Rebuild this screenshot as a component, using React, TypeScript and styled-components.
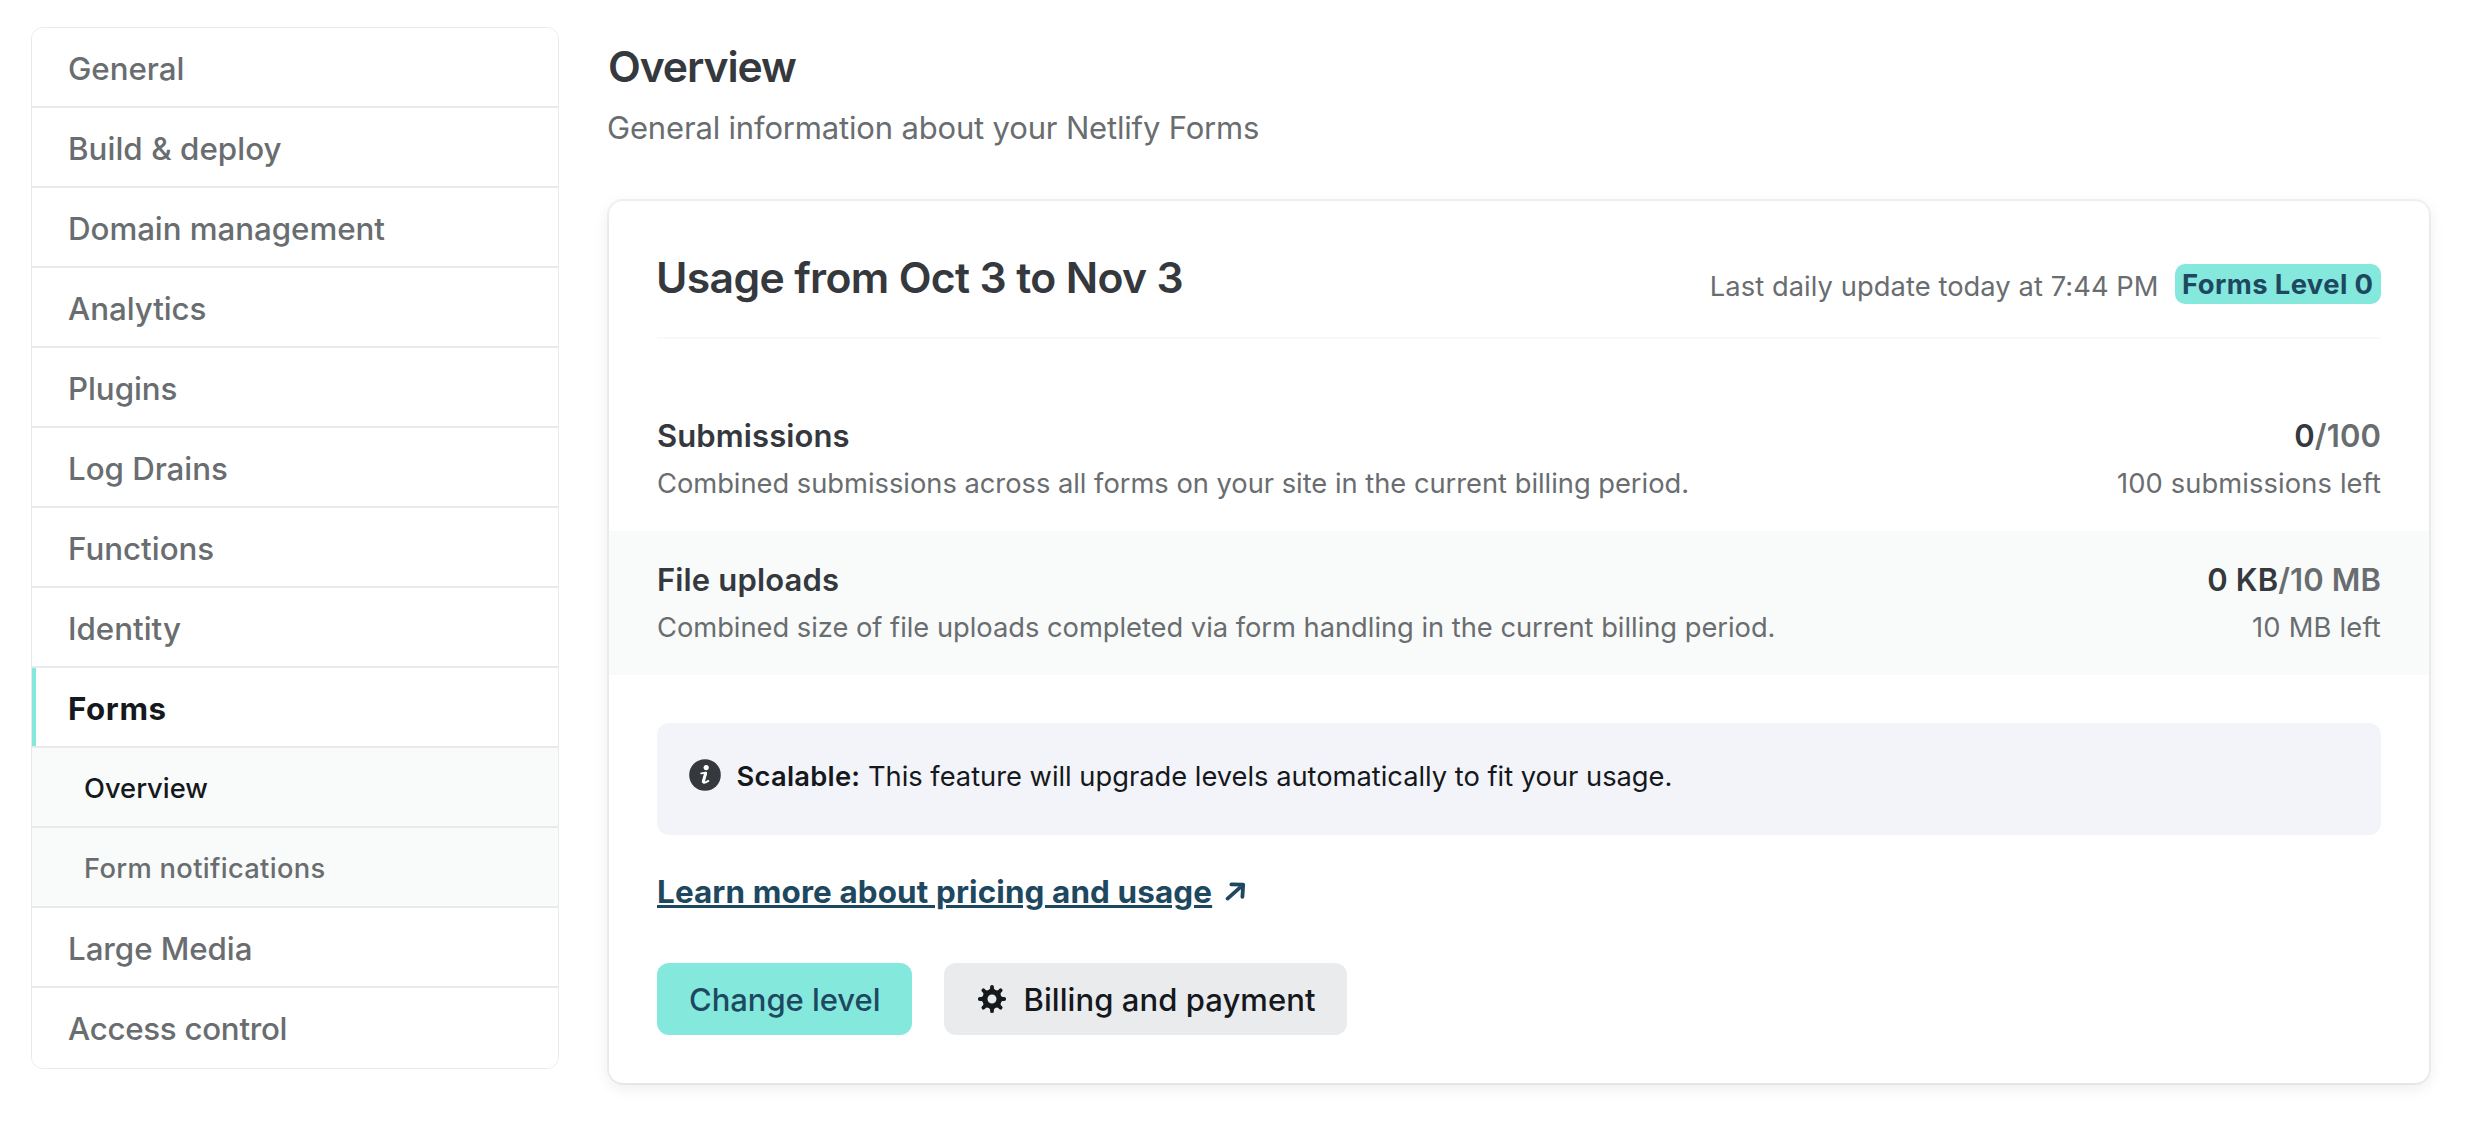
import React from 'react';
import styled, { createGlobalStyle } from 'styled-components';

const color = {
  ink: '#15181c',
  heading: '#35393e',
  muted: '#696d70',
  line: '#e9ebeb',
  teal: '#85e8dd',
  navy: '#1e4860',
  tint: '#f9fbfa',
  info: '#f3f4f9',
  grey: '#e9ebec',
};

const GlobalStyle = createGlobalStyle`
  *, *::before, *::after { box-sizing: border-box; }
  body {
    margin: 0;
    background: #fff;
    color: ${color.ink};
    font-family: Inter, 'Liberation Sans', sans-serif;
  }
  h1, h2, h3, p, ul { margin: 0; padding: 0; }
`;

const Page = styled.div`
  display: flex;
  align-items: flex-start;
  gap: 50px;
  min-height: 1142px;
  padding: 27px 53px 0 31px;
`;

const Sidebar = styled.ul`
  flex: none;
  width: 528px;
  border: 1px solid ${color.line};
  border-radius: 12px;
  list-style: none;
  overflow: hidden;
`;

const NavItem = styled.li<{ $active?: boolean; $sub?: boolean; $track: number }>`
  height: 80px;
  padding: 2px 0 0 ${(p) => (p.$sub ? 52 : 36)}px;
  border-bottom: 2px solid ${color.line};
  background: ${(p) => (p.$sub ? color.tint : '#fff')};
  box-shadow: ${(p) => (p.$active && !p.$sub ? `inset 4px 0 ${color.teal}` : 'none')};
  color: ${(p) => (p.$active ? color.ink : color.muted)};
  font-size: ${(p) => (p.$sub ? 27.3 : 31.3)}px;
  font-weight: ${(p) => (p.$active && !p.$sub ? 700 : 500)};
  line-height: ${(p) => (p.$sub ? 77 : 78)}px;
  letter-spacing: ${(p) => p.$track}px;
  white-space: nowrap;

  &:last-child {
    border-bottom: 0;
  }
`;

const Main = styled.main`
  flex: 1;
  min-width: 0;
  padding-top: 14px;
`;

const Title = styled.h1<{ $track: number }>`
  margin-left: -1px;
  color: ${color.heading};
  font-size: 42.7px;
  font-weight: 600;
  line-height: 51px;
  letter-spacing: ${(p) => p.$track}px;
  white-space: nowrap;
`;

const Intro = styled.p`
  margin: 17px 0 55px -2px;
  color: ${color.muted};
  font-size: 31px;
  line-height: 37px;
  letter-spacing: -0.17px;
`;

const Card = styled.section`
  height: 882px;
  border-radius: 14px;
  background: #fff;
  box-shadow: 0 0 0 2px rgba(14, 30, 37, 0.05), 0 4px 16px rgba(14, 30, 37, 0.09);
`;

const CardHeader = styled.header`
  display: flex;
  justify-content: space-between;
  align-items: flex-start;
  height: 138px;
  margin: 0 48px 48px;
  padding-top: 51px;
  border-bottom: 2px solid #f8f9f9;
`;

const HeaderMeta = styled.div`
  display: flex;
  align-items: flex-start;
  gap: 16px;
  padding-top: 12px;
`;

const Small = styled.p<{ $track: number }>`
  color: ${color.muted};
  font-size: 27.3px;
  line-height: 33px;
  letter-spacing: ${(p) => p.$track}px;
  white-space: nowrap;
`;

const Updated = styled(Small)`
  padding-top: 6px;
`;

const Badge = styled.span`
  height: 40px;
  padding: 4px 7.5px 3px;
  border-radius: 10px;
  background: ${color.teal};
  color: ${color.navy};
  font-size: 27.4px;
  font-weight: 700;
  line-height: 33px;
  letter-spacing: 0.4px;
  white-space: nowrap;
`;

const UsageRow = styled.div<{ $tinted?: boolean }>`
  display: flex;
  justify-content: space-between;
  height: 144px;
  padding: 30px 48px 31px;
  background: ${(p) => (p.$tinted ? color.tint : '#fff')};
`;

const UsageCell = styled.div<{ $end?: boolean }>`
  display: flex;
  flex-direction: column;
  align-items: ${(p) => (p.$end ? 'flex-end' : 'flex-start')};
  gap: 13px;
`;

const Metric = styled.h3<{ $track: number }>`
  color: ${color.heading};
  font-size: 31px;
  font-weight: 600;
  line-height: 37px;
  letter-spacing: ${(p) => p.$track}px;
  white-space: nowrap;

  span { color: ${color.muted}; }
`;

const CardBody = styled.div`
  padding: 48px 48px 0;
`;

const Notice = styled.div`
  display: flex;
  gap: 15.5px;
  height: 112px;
  padding: 36px 32px;
  border-radius: 12px;
  background: ${color.info};

  svg { flex: none; }
`;

const NoticeText = styled.p`
  padding-top: 1px;
  font-size: 27.3px;
  line-height: 33px;
  letter-spacing: -0.01px;
  white-space: nowrap;

  strong {
    font-weight: 600;
    letter-spacing: 0.26px;
  }
`;

const LinkRow = styled.div`
  display: flex;
  align-items: flex-start;
  gap: 13px;
  margin: 38px 0 52px;
  color: ${color.navy};

  svg { margin-top: 9px; }
`;

const TextLink = styled.a`
  color: inherit;
  font-size: 31.4px;
  font-weight: 700;
  line-height: 38px;
  letter-spacing: 0.13px;
  text-decoration: underline;
  text-decoration-thickness: 3px;
  text-underline-offset: 2px;
`;

const Actions = styled.div`
  display: flex;
  gap: 32px;
`;

const Button = styled.button<{ $primary?: boolean }>`
  display: flex;
  gap: 15.5px;
  width: ${(p) => (p.$primary ? 255 : 403)}px;
  height: 72px;
  padding: 18px 0 17px 32px;
  border: 0;
  border-radius: 12px;
  background: ${(p) => (p.$primary ? color.teal : color.grey)};
  color: ${(p) => (p.$primary ? color.navy : color.ink)};
  font-family: inherit;
  font-size: 31px;
  font-weight: 500;
  line-height: 37px;
  letter-spacing: ${(p) => (p.$primary ? -0.05 : 0.07)}px;
  white-space: nowrap;

  svg { flex: none; margin-top: 2px; }
`;

const InfoIcon = () => (
  <svg width="32" height="32" viewBox="0 0 32 32">
    <circle cx="16" cy="16" r="15.8" fill={color.heading} />
    <circle cx="17.2" cy="8.6" r="2.6" fill="#fff" />
    <path
      d="M12.2 14.4 L17 13.6 L14.4 21.6 C13.7 24.6 15.4 24.4 19.4 21.9"
      fill="none"
      stroke="#fff"
      strokeWidth="1.9"
      strokeLinecap="round"
      strokeLinejoin="round"
    />
    <path d="M16.6 14.4 L14.3 22.6" stroke="#fff" strokeWidth="3" strokeLinecap="round" />
  </svg>
);

const ArrowIcon = () => (
  <svg width="22" height="20" viewBox="0 0 22 20">
    <path
      d="M2.6 16.6 L18 2.9 M6.4 2.4 L18.2 2.6 L17.4 14.8"
      fill="none"
      stroke="currentColor"
      strokeWidth="3.8"
      strokeLinecap="round"
      strokeLinejoin="round"
    />
  </svg>
);

const GearIcon = () => (
  <svg width="32" height="32" viewBox="-16 -16 32 32">
    <circle r="7.1" fill="none" stroke="currentColor" strokeWidth="5.2" />
    {[0, 45, 90, 135, 180, 225, 270, 315].map((angle) => (
      <path
        key={angle}
        d="M-3.4 -8.4 L-1.9 -10.4 V-12.2 A1.9 1.9 0 0 1 1.9 -12.2 V-10.4 L3.4 -8.4 Z"
        transform={`rotate(${angle})`}
        fill="currentColor"
      />
    ))}
  </svg>
);

interface NavEntry {
  label: string;
  track: number;
  active?: boolean;
  sub?: boolean;
}

const nav: NavEntry[] = [
  { label: 'General', track: -0.05 },
  { label: 'Build & deploy', track: 0.05 },
  { label: 'Domain management', track: -0.05 },
  { label: 'Analytics', track: -0.05 },
  { label: 'Plugins', track: -0.05 },
  { label: 'Log Drains', track: -0.05 },
  { label: 'Functions', track: 0 },
  { label: 'Identity', track: 0 },
  { label: 'Forms', track: 0.6, active: true },
  { label: 'Overview', track: 0, active: true, sub: true },
  { label: 'Form notifications', track: 0.32, sub: true },
  { label: 'Large Media', track: -0.06 },
  { label: 'Access control', track: -0.29 },
];

export default function App() {
  return (
    <>
      <GlobalStyle />
      <Page>
        <Sidebar>
          {nav.map((item) => (
            <NavItem
              key={`${item.label}-${item.sub ? 'sub' : 'top'}`}
              $active={item.active}
              $sub={item.sub}
              $track={item.track}
            >
              {item.label}
            </NavItem>
          ))}
        </Sidebar>
        <Main>
          <Title $track={-1.1}>Overview</Title>
          <Intro>General information about your Netlify Forms</Intro>
          <Card>
            <CardHeader>
              <Title as="h2" $track={-0.65}>Usage from Oct 3 to Nov 3</Title>
              <HeaderMeta>
                <Updated $track={0.07}>Last daily update today at 7:44 PM</Updated>
                <Badge>Forms Level 0</Badge>
              </HeaderMeta>
            </CardHeader>
            <UsageRow>
              <UsageCell>
                <Metric $track={0.1}>Submissions</Metric>
                <Small $track={-0.015}>
                  Combined submissions across all forms on your site in the current billing period.
                </Small>
              </UsageCell>
              <UsageCell $end>
                <Metric $track={0.1}>0<span>/100</span></Metric>
                <Small $track={0.12}>100 submissions left</Small>
              </UsageCell>
            </UsageRow>
            <UsageRow $tinted>
              <UsageCell>
                <Metric $track={0.14}>File uploads</Metric>
                <Small $track={-0.02}>
                  Combined size of file uploads completed via form handling in the current billing period.
                </Small>
              </UsageCell>
              <UsageCell $end>
                <Metric $track={0.1}>0 KB<span>/10 MB</span></Metric>
                <Small $track={0.22}>10 MB left</Small>
              </UsageCell>
            </UsageRow>
            <CardBody>
              <Notice>
                <InfoIcon />
                <NoticeText>
                  <strong>Scalable:</strong> This feature will upgrade levels automatically to fit your usage.
                </NoticeText>
              </Notice>
              <LinkRow>
                <TextLink>Learn more about pricing and usage</TextLink>
                <ArrowIcon />
              </LinkRow>
              <Actions>
                <Button $primary>Change level</Button>
                <Button>
                  <GearIcon />
                  Billing and payment
                </Button>
              </Actions>
            </CardBody>
          </Card>
        </Main>
      </Page>
    </>
  );
}
